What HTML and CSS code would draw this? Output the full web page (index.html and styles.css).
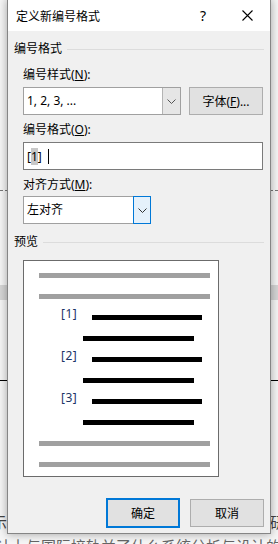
FILE: index.html
```html
<!DOCTYPE html>
<html lang="zh-CN">
<head>
    <meta charset="UTF-8">
    <meta name="viewport" content="width=device-width, initial-scale=1.0">
    <title>定义新编号格式</title>
    <link rel="stylesheet" href="styles.css">
</head>
<body>
    <div class="doc">
        <div class="doc-dash"></div>
        <div class="doc-band"></div>
        <div class="doc-rule"></div>
        <div class="doc-line split"><span class="edge-l">示</span><span class="edge-r">研</span></div>
        <p class="doc-line light">计上与国际接轨并了什么系统分析与设计的什么</p>
    </div>

    <div class="dialog">
        <div class="titlebar">
            <span class="title">定义新编号格式</span>
            <span class="cap help">?</span>
            <span class="cap close">
                <svg width="11" height="11" viewBox="0 0 11 11"><path d="M0.5 0.5 L10.5 10.5 M10.5 0.5 L0.5 10.5" stroke="#000" stroke-width="1.1" fill="none"/></svg>
            </span>
        </div>

        <div class="content">
            <div class="group-head"><span>编号格式</span><i></i></div>
            <div class="indent">
                <label class="lbl lbl-first">编号样式(<u>N</u>):</label>
                <div class="row">
                    <div class="combo combo-style">
                        <span class="combo-text">1, 2, 3, ...</span>
                        <span class="drop">
                            <svg width="9" height="5" viewBox="0 0 9 5"><path d="M0.5 0.5 L4.5 4.5 L8.5 0.5" stroke="#555" fill="none"/></svg>
                        </span>
                    </div>
                    <button class="btn btn-font">字体(<u>F</u>)...</button>
                </div>

                <label class="lbl">编号格式(<u>O</u>):</label>
                <div class="field">
                    <span>[<span class="sel">1</span>]</span><span class="caret"></span>
                </div>

                <label class="lbl">对齐方式(<u>M</u>):</label>
                <div class="combo combo-align">
                    <span class="combo-text">左对齐</span>
                    <span class="drop focus">
                        <svg width="9" height="5" viewBox="0 0 9 5"><path d="M0.5 0.5 L4.5 4.5 L8.5 0.5" stroke="#333" fill="none"/></svg>
                    </span>
                </div>
            </div>

            <div class="group-head group-preview"><span>预览</span><i></i></div>
            <div class="indent">
                <div class="preview">
                    <div class="pl gray"></div>
                    <div class="pl gray"></div>
                    <div class="pl-row"><span class="num">[1]</span><div class="pl black first"></div></div>
                    <div class="pl black cont"></div>
                    <div class="pl-row"><span class="num">[2]</span><div class="pl black first"></div></div>
                    <div class="pl black cont"></div>
                    <div class="pl-row"><span class="num">[3]</span><div class="pl black first"></div></div>
                    <div class="pl black cont"></div>
                    <div class="pl gray"></div>
                    <div class="pl gray"></div>
                </div>
            </div>

            <div class="actions">
                <button class="btn btn-ok">确定</button>
                <button class="btn">取消</button>
            </div>
        </div>
    </div>
</body>
</html>
```

FILE: styles.css
```css
* {
    box-sizing: border-box;
}
body {
    margin: 0;
    height: 544px;
    overflow: hidden;
    position: relative;
    background-color: #f6f6f6;
    font-family: "Noto Sans", "Noto Sans CJK SC", sans-serif;
    font-size: 12px;
    color: #000;
}

/* document behind the dialog */
.doc {
    padding-top: 190px;
    overflow: hidden;
}
.doc-dash {
    border-top: 1px dashed #777;
}
.doc-band {
    margin-top: 94px;
    height: 15px;
    background: #d6d6d6;
}
.doc-rule {
    margin-top: 80px;
    border-top: 1px solid #000;
}
.doc-line {
    margin: 131px 0 0 -4px;
    font-size: 15px;
    line-height: 20px;
    color: #444;
    white-space: nowrap;
}
.doc-line.split {
    display: flex;
    justify-content: space-between;
    margin: 131px 0 0 0;
}
.edge-l {
    margin-left: -8px;
}
.edge-r {
    margin-right: -7px;
}
.doc-line.light {
    margin-top: 4px;
    color: #666;
}

/* dialog window */
.dialog {
    position: absolute;
    left: 7px;
    top: -1px;
    width: 264px;
    height: 535px;
    background: #f0f0f0;
    border: 1px solid #858585;
    box-shadow: 0 0 9px rgba(0, 0, 0, 0.35);
}
.titlebar {
    height: 31px;
    background: #fff;
    display: flex;
    align-items: center;
    padding-left: 8px;
}
.title {
    flex: 1;
    font-size: 12px;
}
.cap {
    width: 46px;
    height: 31px;
    display: flex;
    align-items: center;
    justify-content: center;
}
.help {
    font-size: 14px;
    padding-left: 4px;
}

.content {
    padding: 0 6px;
}
.group-head {
    margin-top: 10px;
    height: 16px;
    line-height: 16px;
    display: flex;
    align-items: center;
}
.group-head i {
    flex: 1;
    height: 1px;
    margin-left: 5px;
    background: #dcdcdc;
}
.indent {
    padding-left: 9px;
}
.lbl {
    display: block;
    line-height: 16px;
    margin-top: 7px;
    margin-bottom: 4px;
}
.lbl-first {
    margin-top: 10px;
}
.row {
    display: flex;
    gap: 8px;
}

.combo {
    display: flex;
    height: 28px;
    background: #fff;
    border: 1px solid #a0a0a0;
}
.combo-style {
    width: 158px;
}
.combo-align {
    width: 128px;
    margin-top: -1px;
}
.combo-text {
    flex: 1;
    padding-left: 3px;
    line-height: 26px;
}
.drop {
    width: 18px;
    display: flex;
    align-items: center;
    justify-content: center;
    background: #e6e6e6;
    border-left: 1px solid #b4b4b4;
}
.drop.focus {
    background: #e5f1fb;
    border: 1px solid #0078d7;
    margin: -1px -1px -1px 0;
}

.btn {
    width: 74px;
    height: 28px;
    padding: 0;
    font-family: inherit;
    font-size: 12px;
    color: #000;
    background: #e1e1e1;
    border: 1px solid #adadad;
}

.field {
    width: 240px;
    height: 28px;
    background: #fff;
    border: 1px solid #7a7a7a;
    padding-left: 3px;
    display: flex;
    align-items: center;
}
.sel {
    background: #c8c8c8;
}
.caret {
    width: 1px;
    height: 15px;
    margin-left: 6px;
    background: #000;
}

.preview {
    margin-top: 10px;
    width: 196px;
    height: 217px;
    background: #fff;
    border: 1px solid #6b6b6b;
    padding: 12px 0 0 15px;
}
.pl {
    height: 5px;
    margin-top: 16px;
}
.pl:first-child {
    margin-top: 0;
}
.pl.gray {
    width: 171px;
    background: #a0a0a0;
}
.pl.black {
    background: #000;
}
.pl.cont {
    width: 111px;
    margin-left: 44px;
}
.pl-row {
    height: 5px;
    margin-top: 16px;
    display: flex;
    align-items: flex-end;
}
.pl-row .pl {
    margin-top: 0;
}
.pl.first {
    width: 110px;
    margin-left: 15px;
}
.num {
    margin-left: 22px;
    margin-bottom: -1px;
    width: 16px;
    line-height: 14px;
    font-size: 12px;
    color: #1c3566;
    letter-spacing: 0.5px;
}

.actions {
    margin-top: 21px;
    display: flex;
    justify-content: flex-end;
    align-items: center;
    gap: 10px;
}
.btn-ok {
    height: 30px;
    border: 2px solid #0078d7;
}
```
